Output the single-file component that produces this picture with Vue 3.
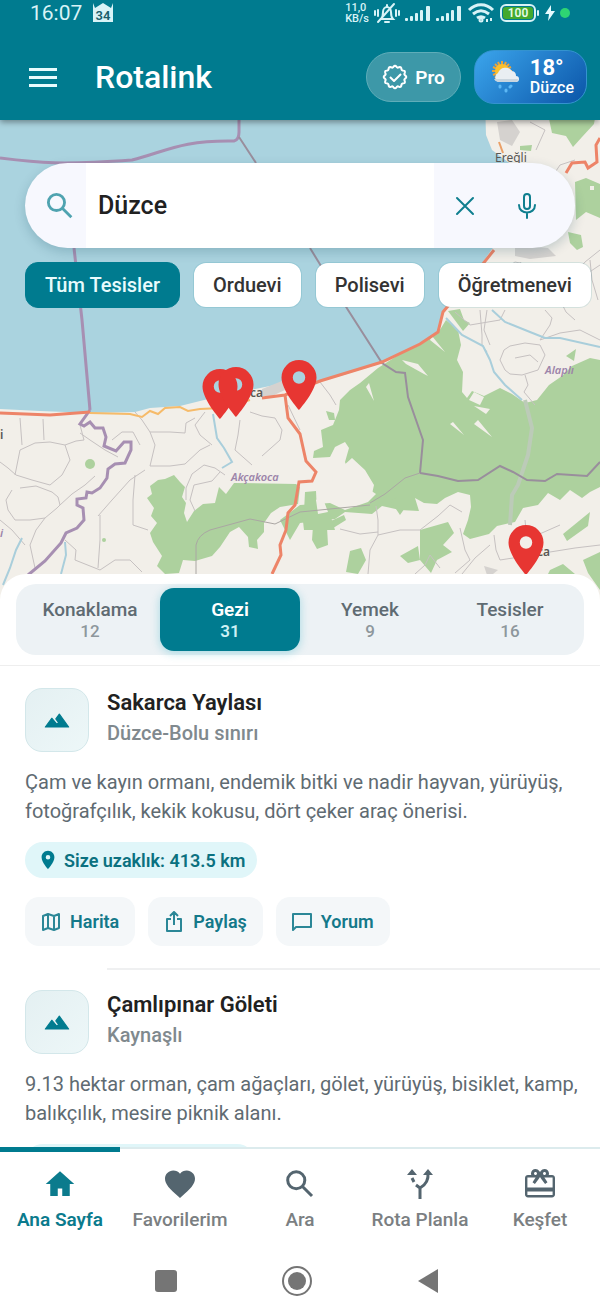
<template>
  <div class="app">
    <header class="header">
      <div class="status">
        <span class="status-time">16:07</span>
        <svg class="status-note" width="22" height="20" viewBox="0 0 22 20">
          <path d="M1 0v19h20V0l-2 5-8-5-8 5z" fill="#d8f3f7" />
          <text x="11" y="17" text-anchor="middle" font-size="13" font-weight="600" fill="#1b5e6b">34</text>
        </svg>
        <div class="status-right">
          <span class="status-speed">11,0<br />KB/s</span>
          <svg width="26" height="22" viewBox="0 0 26 22" fill="none" stroke="#d8f3f7" stroke-width="2" stroke-linecap="round">
            <path d="M7 17c2-2 2-4 2-7 0-3 2-5 4-5s4 2 4 5c0 3 0 5 2 7H8M13 3v1M11 20h4M4 8v6M1 9v4M22 8v6M25 9v4M4 20 20 2" />
          </svg>
          <svg v-for="n in 2" :key="n" width="26" height="18" viewBox="0 0 26 18" fill="#d8f3f7">
            <rect x="0" y="14" width="3" height="3" rx="1" />
            <rect x="5" y="12" width="3" height="5" rx="1" />
            <rect x="10" y="9" width="3" height="8" rx="1" />
            <rect x="15" y="6" width="3" height="11" rx="1" />
            <rect x="21" y="2" width="4" height="15" rx="1" />
          </svg>
          <svg width="28" height="20" viewBox="0 0 28 20" fill="none" stroke="#d8f3f7" stroke-width="3">
            <path d="M2 7c7-7 17-7 24 0M6 11c5-4 11-4 16 0M10 15c3-2 5-2 8 0" />
            <circle cx="14" cy="17" r="1" />
            <path d="M20 16v3M24 15v3" stroke-width="2" />
          </svg>
          <svg width="40" height="18" viewBox="0 0 40 18">
            <rect x="1" y="1" width="34" height="16" rx="5" fill="none" stroke="#d8f3f7" stroke-width="2" />
            <rect x="3" y="3" width="30" height="12" rx="3" fill="#43a92e" />
            <rect x="37" y="6" width="2" height="6" rx="1" fill="#d8f3f7" />
            <text x="18" y="13" text-anchor="middle" font-size="12" font-weight="600" fill="#e6fbe6">100</text>
          </svg>
          <svg width="10" height="16" viewBox="0 0 10 16"><path d="M6 0 0 9h4l-1 7 7-10H6z" fill="#e6fbff" /></svg>
          <span class="status-dot"></span>
        </div>
      </div>
      <div class="appbar">
        <button class="menu-btn" type="button" aria-label="Menü">
          <span></span><span></span><span></span>
        </button>
        <h1 class="brand">Rotalink</h1>
        <button class="pro-btn" type="button">
          <svg width="26" height="26" viewBox="0 0 26 26" fill="none" stroke="#fff" stroke-width="2" stroke-linejoin="round">
            <path :d="sealPath" />
            <path d="m8 13 4 4 7-7" />
          </svg>
          Pro
        </button>
        <button class="weather-btn" type="button">
          <svg width="30" height="34" viewBox="0 0 30 34">
            <g stroke="#e9a53b" stroke-width="2">
              <path d="M10 1v20M0 11h20M3 4l14 14M17 4 3 18M6 2l8 18M14 2 6 20M1 7l18 8M19 7 1 15" />
            </g>
            <circle cx="10" cy="11" r="7" fill="#fbc02d" />
            <path d="M6 22a5 5 0 0 1 0-9 8 8 0 0 1 14-2 5 5 0 0 1 4 5 3 3 0 0 1 0 6z" fill="#e9eef2" />
            <path d="M6 22a5 5 0 0 1-4-3h24a3 3 0 0 1-2 3z" fill="#c9d5de" />
            <path d="M8 26v1M14 30v1M19 26l-1 1" stroke="#5cb8f5" stroke-width="3" stroke-linecap="round" />
          </svg>
          <span class="weather-text">
            <span class="weather-temp">18°</span>
            <span class="weather-city">Düzce</span>
          </span>
        </button>
      </div>
    </header>

    <main class="stage">
      <svg class="map" viewBox="0 120 600 480" preserveAspectRatio="xMidYMin slice">
        <rect y="100" width="600" height="520" fill="#aad3df" />
        <path
          d="M0 409 40 411 90 413 135 412 150 408 180 406 200 401 225 395 250 390 275 385 300 385 340 376 382 363 420 345 438 335 442 315 460 290 480 266 495 245 520 200 512 165 492 150 486 135 485 100 600 100V620H0Z"
          fill="#f2efe9"
        />
        <g fill="#add19e">
          <path d="M438 333 446 320 458 330 461 345 457 360 463 372 462 392 467 398 472 391 484 396 500 388 512 394 525 403 537 400 549 385 562 376 572 366 590 358 600 360V487L590 492 582 498 570 490 560 500 548 493 538 505 523 508 515 522 497 526 489 534 470 539 463 534 468 520 471 507 470 495 458 492 445 498 437 504 424 503 415 498 419 511 400 510 382 506 372 514 345 512 335 519 300 523 290 540 280 520 300 505 330 503 345 510 368 502 376 494 370 490 357 485 362 478 350 475 345 462 349 448 345 442 335 447 330 457 313 458 314 451 323 447 321 430 333 425 339 410 340 400 350 390 360 383 378 368 400 354 420 345Z" />
          <path d="M147 498 152 494 150 486 158 480 165 479 174 475 180 482 185 487 182 497 186 503 184 513 187 522 194 511 203 504 215 503 219 487 226 494 234 483 296 484 300 487 298 504 280 507 271 513 264 523 264 532 257 540 258 549 249 547 248 537 239 527 230 532 220 547 212 556 195 561 183 560 179 573 165 574 157 566 162 556 153 542 150 533 157 523 151 516 154 508Z" />
          <path d="M545 100H598L594 124 582 137 573 147 566 136 552 133ZM575 182 586 178 600 184V218L586 212 576 220ZM568 232 581 235 583 247 577 250 570 243ZM520 146 532 145 531 151 520 150Z" />
          <path d="M448 311 460 309 464 320 470 323 463 331ZM566 356 576 349 574 361ZM313 526 327 527 328 545 317 549 312 540ZM420 530 448 522 454 533 443 545 452 552 437 560 431 573 420 560ZM350 551 361 548 366 560 358 574 346 572ZM563 534 590 512 588 526 567 541ZM400 556 418 546 420 560 408 563ZM583 560 600 552V590L588 573ZM550 570 563 564 575 574H548Z" />
          <path d="M322 525 344 515 346 520 330 530ZM390 500 398 497 407 505 400 515ZM326 411 334 413 335 420 329 420ZM305 492 316 491 317 512 304 512Z" />
          <path d="M302 513 318 500 330 514 335 530 304 530Z" />
          <circle cx="90" cy="464" r="5" />
          <circle cx="104" cy="540" r="2" />
        </g>
        <g fill="#f2efe9">
          <path d="M333 475 352 458 365 470 374 485 372 494 355 492 346 498 327 490 318 481 332 482ZM316 500 322 496 328 512 318 514ZM406 364 424 374 428 376 418 364 402 360ZM366 387 374 401 369 383ZM430 340 445 352 432 336ZM474 406 490 409 486 414ZM453 422 464 435 450 424ZM478 420 492 437 474 424ZM469 400 474 392 484 397 480 405Z" />
          <path d="M590 186h4v4h-4z" />
        </g>
        <g fill="#d5d2cf">
          <path d="M497 122 512 120 520 132 512 146 500 140ZM515 245 548 248 556 256 530 259 515 256ZM262 389 282 381 285 390 272 396 262 396ZM484 566 498 570 488 578Z" />
        </g>
        <!-- minor roads -->
        <g fill="none" stroke="#c6c1c1" stroke-width="1" stroke-linejoin="round">
          <path d="M20 418 22 445M43 419 44 440M0 462 8 468 16 475 32 480 50 485 62 475 70 460 65 445 50 442 35 443 20 450 18 460 15 475M80 433 90 440 105 450 118 457M65 445 76 441 84 440 80 425M135 412 142 420 150 432 155 445 150 466M150 466 170 466 185 464 200 450 210 445M150 432 170 432 185 433 186 423 195 418M12 490 6 500 8 510 15 520 30 520 45 518 57 508 60 505 58 497 52 492 36 486 20 488M60 505 72 494 85 485 95 476M45 518 36 530 30 545 35 568M100 515 100 540 98 568M98 516 112 500 130 480 145 470M135 475 133 500 133 525 148 530M0 520 12 530 25 545M65 540 76 550 75 560 100 570 115 560 130 560 142 572M186 500 186 488 192 474 204 465 215 468 225 475M240 420 238 435 235 450 252 465M250 412 262 416 275 418 282 430 280 440 262 456M288 405 300 430M205 412 195 425 200 435 212 445M112 440 122 432 133 432 140 445M195 511 190 500 194 485 212 481 220 472" />
          <path d="M480 310 482 335 482 345 487 352M487 310 484 330 490 345M500 360 504 350 510 346 525 343 540 345 545 355 538 370 522 375 510 374 505 370ZM525 375 528 385 524 392 535 405M545 310 552 318 550 325 540 340 560 333 580 330 600 340M560 300 566 312 575 320M600 250 585 262 570 280 560 300M510 280 495 285 480 300M520 262 530 275 545 280 580 290M575 160 560 165 550 180M590 260 592 280 598 300M376 506 378 520 378 535 370 550 368 574M340 529 360 534 378 532M378 535 400 530 420 530 438 516 450 505 462 512M460 528 465 550 470 560 455 573M494 535 496 550 500 560 526 556M550 552 575 548 600 545M415 574 425 565 430 555 440 568M525 520 526 530 535 536 560 525M320 382 330 395 336 405M462 574 475 558 490 545M455 312 470 325 500 320 505 310M515 358 530 355 538 362M536 150 545 130 530 122M480 270 500 272 515 262 530 265M575 268 585 275 600 265" />
        </g>
        <g fill="none" stroke="#a9cedb" stroke-width="2">
          <path d="M213 414 217 438 224 448 232 462 222 468M446 318 462 335 483 346 490 360 494 372 505 385 522 400M492 310 505 322 530 332 545 338 560 338 600 347M22 538 16 550 10 568 3 585M65 542 66 555 61 574" />
        </g>
        <path d="M525 400 532 428 528 455 518 485 512 495 510 525" fill="none" stroke="#bccbb8" stroke-width="4" />
        <!-- borders -->
        <g fill="none" stroke="#a78fb2" stroke-width="3">
          <path d="M0 158C40 163 60 165 132 160 165 152 180 140 234 141Q239 140 239 132V100" />
          <path d="M74 248 82 320 90 410" />
          <path d="M90 410 80 424 84 426 90 422 95 428 103 428 106 437 104 446 116 451 124 442 131 442 131 450 125 463 115 464 108 469 107 478 100 488 92 493 87 492 86 498 77 499 77 505 83 508 84 520 77 528 66 533 61 543 45 561 28 575" />
        </g>
        <g fill="none" stroke="#998e9c" stroke-width="2">
          <path d="M239 137 256 163M310 248 348 310 382 363 396 372 405 373 408 397 423 440 420 473M420 473 438 476 458 481 478 480 500 466 513 472 527 480 545 481 557 474 587 476 600 462" />
          <path d="M420 473 405 478 385 494 370 503M196 574V545Q198 535 210 530L250 519 275 524 300 512 370 505" stroke="#aaa6a3" stroke-width="1" />
        </g>
        <!-- main roads -->
        <path d="M90 413 130 414 142 417 150 411 158 414 165 408 180 407 188 411 200 409 222 408 250 400" fill="none" stroke="#f6bb6a" stroke-width="2" />
        <g fill="none" stroke="#ed8468" stroke-width="2">
          <path d="M0 413 50 415 90 412M262 398 285 395 320 381 382 362 420 344 438 332 443 312 470 280 494 250M285 395 288 418 300 434 306 461 316 472 312 481 299 482 295 505 288 513 286 530 280 545 281 555 272 574" stroke-width="3" />
          <path d="M566 173 572 163 585 162 588 168 597 162 596 145 600 138" stroke-width="3" />
          <path d="M499 142 503 153" stroke="#eaa067" />
        </g>
        <g class="map-label" font-size="12" fill="#5b5854">
          <text x="495" y="162">Ereğli</text>
          <text x="250" y="397" font-weight="600">ca</text>
          <text x="537" y="556" font-weight="600">ca</text>
          <text x="0" y="439" font-weight="600">i</text>
        </g>
        <g class="map-label" font-size="11" font-style="italic" font-weight="600" fill="#9c84a9">
          <text x="231" y="481">Akçakoca</text>
          <text x="545" y="374">Alaplı</text>
          <text x="0" y="537">i</text>
        </g>
        <g fill="#e73632">
          <path v-for="pin in pins" :key="pin.x" :transform="`translate(${pin.x} ${pin.y}) scale(2.5)`" :d="pinPath" />
        </g>
      </svg>

      <div class="overlay">
        <form class="search" @submit.prevent>
          <svg class="search-icon" width="34" height="34" viewBox="0 0 24 24"><path :d="magnifyPath" /></svg>
          <input v-model="query" class="search-input" type="text" aria-label="Şehir ara" />
          <button class="search-btn" type="button" aria-label="Temizle" @click="query = ''">
            <svg width="30" height="30" viewBox="0 0 30 30"><path d="m7 7 16 16M23 7 7 23" /></svg>
          </button>
          <button class="search-btn" type="button" aria-label="Sesli arama">
            <svg width="30" height="30" viewBox="0 0 30 30">
              <rect x="12" y="3" width="6" height="15" rx="3" />
              <path d="M7 14c0 10 16 10 16 0M15 22v5" />
            </svg>
          </button>
        </form>
        <div class="chips">
          <button
            v-for="chip in chips"
            :key="chip"
            type="button"
            class="chip"
            :class="{ active: chip === activeChip }"
            @click="activeChip = chip"
          >
            {{ chip }}
          </button>
        </div>
      </div>
    </main>

    <section class="sheet">
      <div class="tabs-wrap">
        <div class="tabs">
          <button
            v-for="tab in tabs"
            :key="tab.label"
            type="button"
            class="tab"
            :class="{ active: tab.label === activeTab }"
            @click="activeTab = tab.label"
          >
            {{ tab.label }}
            <span class="tab-count">{{ tab.count }}</span>
          </button>
        </div>
      </div>

      <div class="list">
        <article v-for="place in places" :key="place.name" class="place">
          <div class="place-head">
            <div class="place-icon">
              <svg width="28" height="28" viewBox="0 0 24 24">
                <path d="M14 7l-3 4 2.4 3.3-1.6 1.2L7.5 10.5 2 18h20z" stroke-width="1" stroke-linejoin="round" />
              </svg>
            </div>
            <div>
              <h2 class="place-name">{{ place.name }}</h2>
              <p class="place-area">{{ place.area }}</p>
            </div>
          </div>
          <p class="place-desc">{{ place.description }}</p>
          <!-- stays an empty pill until the distance is known -->
          <span class="distance">
            <template v-if="place.distance">
              <svg width="22" height="22" viewBox="0 0 24 24"><path :d="pinPath24" /></svg>
              Size uzaklık: {{ place.distance }} km
            </template>
          </span>
          <div v-if="place.distance" class="actions">
            <button type="button" class="action">
              <svg width="20" height="20" viewBox="0 0 20 20">
                <path d="M2 4 7 2l6 2 5-2v14l-5 2-6-2-5 2zM7 2v14M13 4v14" />
              </svg>
              Harita
            </button>
            <button type="button" class="action">
              <svg width="20" height="22" viewBox="0 0 20 22">
                <path d="M7 8H3v12h14V8h-4M10 14V2M6 5l4-4 4 4" />
              </svg>
              Paylaş
            </button>
            <button type="button" class="action">
              <svg width="20" height="20" viewBox="0 0 20 20">
                <path d="M1 18V2h18v13H4z" />
              </svg>
              Yorum
            </button>
          </div>
        </article>
      </div>
    </section>

    <footer class="footer">
      <nav class="nav">
        <a
          v-for="item in navItems"
          :key="item.label"
          href="#"
          class="nav-item"
          :class="{ active: item.label === activeNav }"
          @click.prevent="activeNav = item.label"
        >
          <svg v-if="item.path" width="36" height="36" viewBox="0 0 24 24" :class="{ outline: item.outline }">
            <path :d="item.path" />
          </svg>
          <svg v-else class="fork" width="36" height="36" viewBox="0 0 36 36">
            <path d="M18 33V22Q27 17 26 7M18 22l-4-3M12 16l-2-4M10 9V7" />
            <path class="fork-head" d="m21 9 5-6 5 6zM5 9l5-6 5 6z" />
          </svg>
          {{ item.label }}
        </a>
      </nav>
      <div class="system">
        <button type="button" aria-label="Son uygulamalar">
          <svg width="32" height="32" viewBox="0 0 32 32"><rect x="5" y="5" width="22" height="22" rx="3" /></svg>
        </button>
        <button type="button" aria-label="Ana ekran">
          <svg width="32" height="32" viewBox="0 0 32 32">
            <circle cx="16" cy="16" r="14" fill="none" stroke="#757575" stroke-width="2" />
            <circle cx="16" cy="16" r="9" />
          </svg>
        </button>
        <button type="button" aria-label="Geri">
          <svg width="32" height="32" viewBox="0 0 32 32"><path d="M26 4v24L6 16z" /></svg>
        </button>
      </div>
    </footer>
  </div>
</template>

<script setup>
import { ref } from 'vue'

const query = ref('Düzce')
const activeChip = ref('Tüm Tesisler')
const activeTab = ref('Gezi')
const activeNav = ref('Ana Sayfa')

const chips = ['Tüm Tesisler', 'Orduevi', 'Polisevi', 'Öğretmenevi']

const tabs = [
  { label: 'Konaklama', count: 12 },
  { label: 'Gezi', count: 31 },
  { label: 'Yemek', count: 9 },
  { label: 'Tesisler', count: 16 }
]

const places = [
  {
    name: 'Sakarca Yaylası',
    area: 'Düzce-Bolu sınırı',
    description: 'Çam ve kayın ormanı, endemik bitki ve nadir hayvan, yürüyüş, fotoğrafçılık, kekik kokusu, dört çeker araç önerisi.',
    distance: '413.5'
  },
  {
    name: 'Çamlıpınar Göleti',
    area: 'Kaynaşlı',
    description: '9.13 hektar orman, çam ağaçları, gölet, yürüyüş, bisiklet, kamp, balıkçılık, mesire piknik alanı.',
    distance: null
  }
]

// Pin tips on the map; the path below is drawn from the tip upwards
const pins = [
  { x: 220, y: 419 },
  { x: 236, y: 417 },
  { x: 299, y: 410 },
  { x: 526, y: 575 }
]

const pinPath = 'M0 0S-7-7.75-7-13A7 7 0 1 1 7-13C7-7.75 0 0 0 0ZM0-10.5A2.5 2.5 0 1 0 0-15.5A2.5 2.5 0 1 0 0-10.5Z'
const pinPath24 = 'M12 2C8.13 2 5 5.13 5 9c0 5.25 7 13 7 13s7-7.75 7-13c0-3.87-3.13-7-7-7zm0 9.5a2.5 2.5 0 1 1 0-5 2.5 2.5 0 0 1 0 5z'
const magnifyPath = 'M14 14l6 6M9.500 3.800a5.700 5.700 0 1 1 0 11.400 5.700 5.700 0 0 1 0-11.400z'

const navItems = [
  { label: 'Ana Sayfa', path: 'M10.5 20v-5h3v5h5v-8h3L12 3.5 2.500 12h3v8z' },
  { label: 'Favorilerim', path: 'M12 21.35l-1.45-1.32C5.4 15.36 2 12.28 2 8.5 2 5.42 4.42 3 7.5 3c1.74 0 3.41.81 4.5 2.09C13.09 3.81 14.76 3 16.5 3 19.58 3 22 5.42 22 8.5c0 3.78-3.4 6.86-8.55 11.54z' },
  { label: 'Ara', path: magnifyPath, outline: true },
  { label: 'Rota Planla' },
  { label: 'Keşfet', path: 'M20 6h-2.18c.11-.31.18-.65.18-1 0-1.66-1.34-3-3-3-1.05 0-1.96.54-2.5 1.35l-.5.67-.5-.68C10.96 2.54 10.05 2 9 2 7.34 2 6 3.34 6 5c0 .35.07.69.18 1H4c-1.11 0-1.99.89-1.99 2L2 19c0 1.11.89 2 2 2h16c1.11 0 2-.89 2-2V8c0-1.11-.89-2-2-2zm-5-2c.55 0 1 .45 1 1s-.45 1-1 1-1-.45-1-1 .45-1 1-1zM9 4c.55 0 1 .45 1 1s-.45 1-1 1-1-.45-1-1 .45-1 1-1zm11.400 15.400H3.600v-2.400h16.800zm0-5H3.600V7.600h5.480L7 10.830 8.620 12 11 8.760l1-1.360 1 1.360L15.380 12 17 10.830 14.920 7.600h5.480z' }
]

// Scalloped seal outline of the Pro badge
const sealPath = 'M' + Array.from({ length: 96 }, (_, i) => {
  const angle = (i / 96) * Math.PI * 2
  const r = 10.5 + Math.cos(angle * 12) * 0.8
  return `${(13 + r * Math.cos(angle)).toFixed(2)} ${(13 + r * Math.sin(angle)).toFixed(2)}`
}).join('L') + 'Z'
</script>

<style>
body {
  margin: 0;
  background: #fff;
}
</style>

<style scoped>
.app {
  display: grid;
  grid-template-rows: auto minmax(0, 454fr) minmax(0, 573fr) auto;
  grid-template-columns: minmax(0, 1fr);
  height: 100vh;
  font-family: Roboto, 'Noto Sans', sans-serif;
  color: #212121;
}

button {
  font-family: inherit;
  border: none;
  cursor: pointer;
}

.header {
  position: relative;
  z-index: 2;
  background: #007b8f;
  color: #fff;
  box-shadow: 0 2px 6px rgba(0, 0, 0, 0.4);
}

.status {
  display: flex;
  align-items: center;
  height: 26px;
  padding: 0 30px;
  color: #d8f3f7;
}

.status-time {
  font-size: 21px;
}

.status-note {
  margin-left: 10px;
}

.status-right {
  display: flex;
  align-items: center;
  gap: 5px;
  margin-left: auto;
}

.status-speed {
  font-size: 11px;
  line-height: 11px;
  font-weight: 500;
}

.status-dot {
  width: 10px;
  height: 10px;
  border-radius: 50%;
  background: #2ed573;
}

.appbar {
  display: flex;
  align-items: center;
  padding: 24px 13px 16px 29px;
}

.menu-btn {
  display: flex;
  flex-direction: column;
  gap: 5px;
  width: 28px;
  padding: 0;
  background: none;
}

.menu-btn span {
  height: 3px;
  background: #e8fbfd;
}

.brand {
  margin: 0 auto 0 38px;
  font-size: 32px;
  line-height: 40px;
  font-weight: 500;
}

.pro-btn {
  display: flex;
  align-items: center;
  gap: 7px;
  height: 50px;
  padding: 0 15px;
  border: 1px solid #5fadb9;
  border-radius: 25px;
  background: #3d98a8;
  color: #fff;
  font-size: 19px;
  font-weight: 600;
}

.weather-btn {
  display: flex;
  align-items: center;
  gap: 8px;
  height: 54px;
  margin-left: 13px;
  padding: 0 12px 0 17px;
  border: 1px solid #3493cf;
  border-radius: 20px;
  background: linear-gradient(135deg, #3ba5ec, #0b55a8);
  color: #fff;
}

.weather-text {
  display: flex;
  flex-direction: column;
  align-items: flex-start;
}

.weather-temp {
  font-size: 22px;
  line-height: 22px;
  font-weight: 700;
}

.weather-city {
  font-size: 16px;
  line-height: 18px;
  font-weight: 500;
}

.stage {
  position: relative;
}

/* The map runs on under the rounded corners of the sheet */
.map {
  position: absolute;
  top: 0;
  left: 0;
  width: 100%;
  height: calc(100% + 26px);
}

.map-label {
  font-family: 'Noto Sans', sans-serif;
}

.overlay {
  position: relative;
  padding: 43px 0 0;
}

.search {
  display: flex;
  align-items: center;
  height: 85px;
  margin: 0 25px;
  border-radius: 43px;
  background: #f7f8fe;
  box-shadow: 0 4px 12px rgba(0, 60, 80, 0.2);
}

.search-icon {
  flex: none;
  margin: 0 9px 0 18px;
  fill: none;
  stroke: #4fa3b0;
  stroke-width: 2;
}

.search-input {
  flex: 1;
  min-width: 0;
  height: 100%;
  padding: 0 12px;
  border: none;
  background: #fff;
  font-family: inherit;
  font-size: 25px;
  font-weight: 500;
  color: #212121;
  outline: none;
}

.search-btn {
  display: flex;
  justify-content: center;
  width: 62px;
  padding: 0;
  background: none;
}

.search-btn:last-child {
  margin-right: 17px;
}

.search-btn svg {
  fill: none;
  stroke: #0f7f8f;
  stroke-width: 2;
  stroke-linecap: round;
}

.chips {
  display: flex;
  gap: 13px;
  margin-top: 14px;
  padding: 0 9px 0 25px;
  overflow: hidden;
}

.chip {
  flex: none;
  height: 46px;
  padding: 0 19px;
  border: 1px solid rgba(0, 123, 143, 0.12);
  border-radius: 13px;
  background: #fff;
  background-clip: padding-box;
  color: #333;
  font-size: 20px;
  font-weight: 500;
}

.chip.active {
  border-color: #007b8f;
  background: #007b8f;
  color: #e8fbfd;
}

.sheet {
  position: relative;
  display: flex;
  flex-direction: column;
  border-radius: 26px 26px 0 0;
  background: #fff;
  overflow: hidden;
}

.tabs-wrap {
  padding: 10px 16px;
  border-bottom: 1px solid #eeeeee;
}

.tabs {
  display: flex;
  padding: 4px;
  border-radius: 20px;
  background: #edf2f5;
}

.tab {
  flex: 1;
  display: flex;
  flex-direction: column;
  align-items: center;
  justify-content: center;
  height: 63px;
  padding: 0;
  border-radius: 14px;
  background: none;
  color: #5f6b72;
  font-size: 19px;
  line-height: 22px;
  font-weight: 500;
}

.tab.active {
  background: #007b8f;
  color: #fff;
  font-weight: 600;
  box-shadow: 0 2px 10px rgba(0, 160, 185, 0.3);
}

.tab-count {
  font-size: 17px;
  line-height: 20px;
  color: #8d979c;
}

.tab.active .tab-count {
  color: #cdf1f5;
}

.list {
  flex: 1;
  min-height: 0;
  overflow-y: auto;
  scrollbar-width: none;
}

.place {
  position: relative;
  padding: 22px 16px 22px 25px;
}

/* Inset divider starting under the title */
.place + .place::before {
  content: '';
  position: absolute;
  top: 0;
  left: 107px;
  right: 0;
  height: 2px;
  background: #eff0f1;
}

.place-head {
  display: flex;
  align-items: flex-start;
  gap: 18px;
}

.place-icon {
  display: flex;
  align-items: center;
  justify-content: center;
  box-sizing: border-box;
  width: 64px;
  height: 64px;
  border: 1px solid #d3e7ea;
  border-radius: 17px;
  background: linear-gradient(135deg, #e4f0f2, #edf7f8);
}

.place-icon path {
  fill: #007b8f;
  stroke: #007b8f;
}

.place-name {
  margin: 0;
  font-size: 22px;
  line-height: 30px;
  font-weight: 600;
}

.place-area {
  margin: 0;
  font-size: 20px;
  line-height: 30px;
  font-weight: 500;
  color: #80898e;
}

.place-desc {
  margin: 16px 0;
  font-size: 20px;
  line-height: 29px;
  color: #5f6b72;
}

.distance {
  display: inline-flex;
  align-items: center;
  box-sizing: border-box;
  gap: 5px;
  min-width: 230px;
  height: 36px;
  padding: 0 12px;
  border-radius: 18px;
  background: #e0f6f9;
  color: #0b7180;
  font-size: 18px;
  font-weight: 600;
}

.distance svg {
  fill: #007b8f;
}

.actions {
  display: flex;
  gap: 13px;
  margin-top: 19px;
}

.action {
  display: flex;
  align-items: center;
  gap: 9px;
  height: 49px;
  padding: 0 16px;
  border-radius: 14px;
  background: #f4f7f9;
  color: #14798a;
  font-size: 18px;
  font-weight: 600;
}

.action svg {
  fill: none;
  stroke: #2b8797;
  stroke-width: 2;
  stroke-linejoin: round;
}

.nav {
  display: flex;
  border-top: 2px solid #dcebed;
  background: #fff;
}

.nav-item {
  position: relative;
  flex: 1;
  display: flex;
  flex-direction: column;
  align-items: center;
  gap: 7px;
  padding: 17px 0 18px;
  color: #7b7f82;
  font-size: 19px;
  line-height: 22px;
  font-weight: 500;
  text-decoration: none;
  white-space: nowrap;
}

.nav-item svg {
  fill: #54656f;
}

.nav-item .outline {
  fill: none;
  stroke: #54656f;
  stroke-width: 2;
}

.nav-item .fork {
  fill: none;
  stroke: #54656f;
  stroke-width: 3;
}

.nav-item .fork-head {
  fill: #54656f;
  stroke: none;
}

.nav-item.active {
  color: #0b7b8d;
  font-weight: 600;
}

.nav-item.active svg {
  fill: #0b7b8d;
}

.nav-item.active::before {
  content: '';
  position: absolute;
  top: -2px;
  left: 0;
  right: 0;
  height: 5px;
  background: #007b8f;
}

.system {
  display: flex;
  justify-content: center;
  gap: 99px;
  padding: 16px 6px 2px 0;
}

.system button {
  display: flex;
  padding: 0;
  background: none;
}

.system svg {
  fill: #757575;
}
</style>
